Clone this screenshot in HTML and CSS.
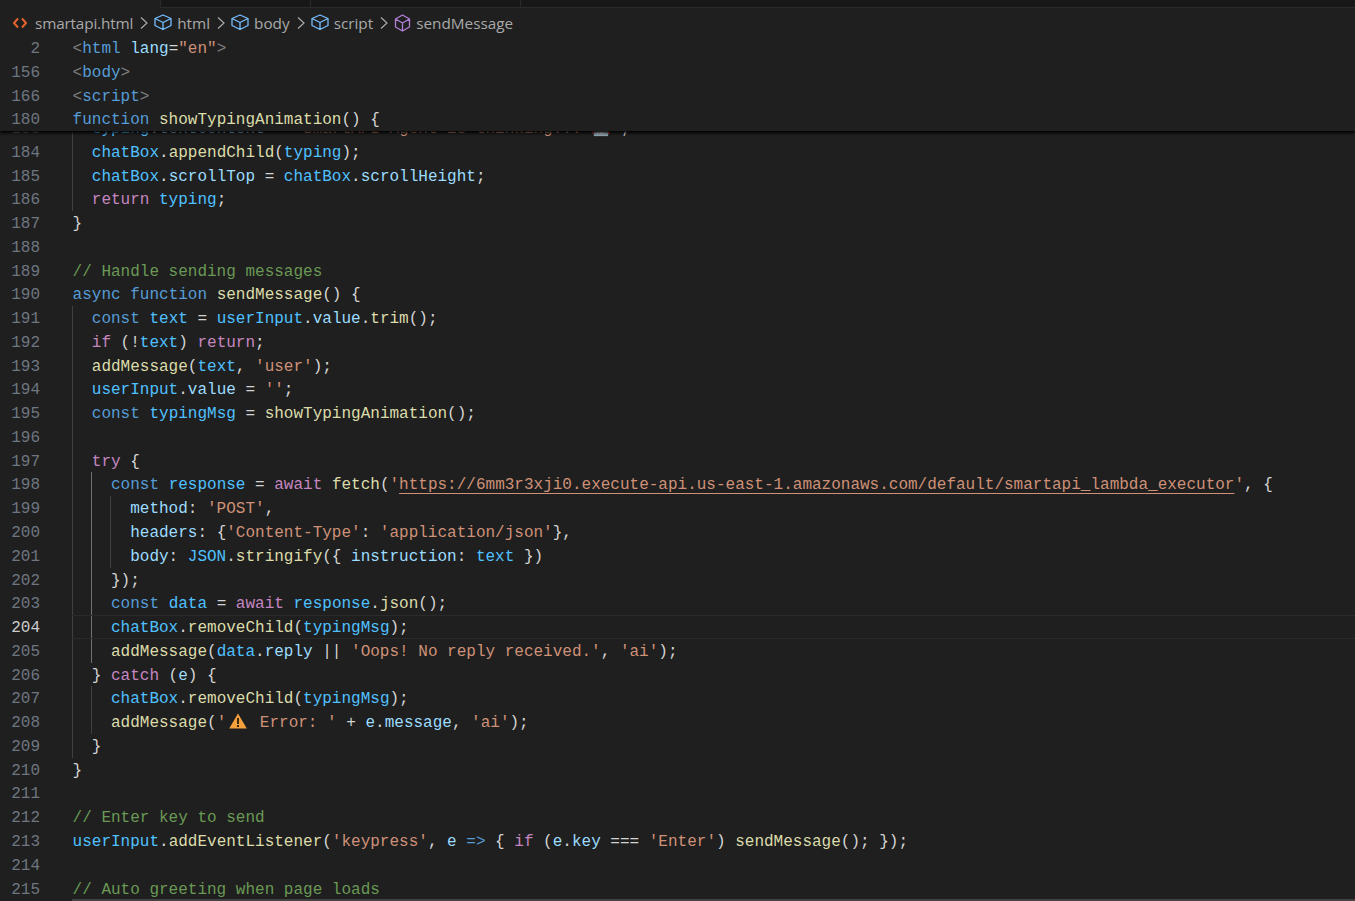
FILE: index.html
```html
<!DOCTYPE html>
<html lang="en">
<head>
  <meta charset="UTF-8" />
  <title>smartapi.html</title>
  <link rel="stylesheet" href="styles.css">
</head>
<body>
  <div class="tabs">
    <div class="tab tab-active"></div>
    <div class="tab tab-a"></div>
    <div class="tab tab-b"></div>
    <div class="tab tab-rest"></div>
  </div>

  <div class="crumbs">
    <svg class="ic-file" width="14" height="12" viewBox="0 0 14 12"><path d="M5 1.500 1 6l4 4.500M9 1.500 13 6l-4 4.500" /></svg>
    <span class="crumb crumb-file">smartapi.html</span>
    <svg class="chev" width="8" height="14" viewBox="0 0 8 14"><path d="M1 1.500 7 7l-6 5.500" /></svg>
    <svg class="cube" width="18" height="17" viewBox="0 0 18 17"><path d="M9 1 17 4.500V11.500L9 15.500 1 11.500V4.500ZM1 4.500 9 8.500 17 4.500M9 8.500V15.500" /></svg>
    <span class="crumb">html</span>
    <svg class="chev" width="8" height="14" viewBox="0 0 8 14"><path d="M1 1.500 7 7l-6 5.500" /></svg>
    <svg class="cube" width="18" height="17" viewBox="0 0 18 17"><path d="M9 1 17 4.500V11.500L9 15.500 1 11.500V4.500ZM1 4.500 9 8.500 17 4.500M9 8.500V15.500" /></svg>
    <span class="crumb">body</span>
    <svg class="chev" width="8" height="14" viewBox="0 0 8 14"><path d="M1 1.500 7 7l-6 5.500" /></svg>
    <svg class="cube" width="18" height="17" viewBox="0 0 18 17"><path d="M9 1 17 4.500V11.500L9 15.500 1 11.500V4.500ZM1 4.500 9 8.500 17 4.500M9 8.500V15.500" /></svg>
    <span class="crumb">script</span>
    <svg class="chev" width="8" height="14" viewBox="0 0 8 14"><path d="M1 1.500 7 7l-6 5.500" /></svg>
    <svg class="cube cube-method" width="17" height="18" viewBox="0 0 17 18"><path d="M8.500 1 15.500 5V13L8.500 17 1.500 13V5ZM1.500 5 8.500 9 15.500 5M8.500 9V17" /></svg>
    <span class="crumb">sendMessage</span>
  </div>

  <div class="sticky">
    <div class="row"><span class="num">2</span><code class="code"><i class="p">&lt;</i><i class="k">html</i> <i class="v">lang</i>=<i class="s">"en"</i><i class="p">&gt;</i></code></div>
    <div class="row"><span class="num">156</span><code class="code"><i class="p">&lt;</i><i class="k">body</i><i class="p">&gt;</i></code></div>
    <div class="row"><span class="num">166</span><code class="code"><i class="p">&lt;</i><i class="k">script</i><i class="p">&gt;</i></code></div>
    <div class="row"><span class="num">180</span><code class="code"><i class="k">function</i> <i class="f">showTypingAnimation</i>() {</code></div>
  </div>

  <div class="editor">
    <div class="lines">
      <div class="row"><span class="num">183</span><code class="code g1">  <i class="c">typing</i>.<i class="v">textContent</i> = <i class="s">'SmartAPI Agent is thinking... 🤖'</i>;</code></div>
      <div class="row"><span class="num">184</span><code class="code g1">  <i class="c">chatBox</i>.<i class="f">appendChild</i>(<i class="c">typing</i>);</code></div>
      <div class="row"><span class="num">185</span><code class="code g1">  <i class="c">chatBox</i>.<i class="v">scrollTop</i> = <i class="c">chatBox</i>.<i class="v">scrollHeight</i>;</code></div>
      <div class="row"><span class="num">186</span><code class="code g1">  <i class="m">return</i> <i class="c">typing</i>;</code></div>
      <div class="row"><span class="num">187</span><code class="code">}</code></div>
      <div class="row"><span class="num">188</span><code class="code"></code></div>
      <div class="row"><span class="num">189</span><code class="code"><i class="n">// Handle sending messages</i></code></div>
      <div class="row"><span class="num">190</span><code class="code"><i class="k">async</i> <i class="k">function</i> <i class="f">sendMessage</i>() {</code></div>
      <div class="row"><span class="num">191</span><code class="code g1">  <i class="k">const</i> <i class="c">text</i> = <i class="c">userInput</i>.<i class="v">value</i>.<i class="f">trim</i>();</code></div>
      <div class="row"><span class="num">192</span><code class="code g1">  <i class="m">if</i> (!<i class="c">text</i>) <i class="m">return</i>;</code></div>
      <div class="row"><span class="num">193</span><code class="code g1">  <i class="f">addMessage</i>(<i class="c">text</i>, <i class="s">'user'</i>);</code></div>
      <div class="row"><span class="num">194</span><code class="code g1">  <i class="c">userInput</i>.<i class="v">value</i> = <i class="s">''</i>;</code></div>
      <div class="row"><span class="num">195</span><code class="code g1">  <i class="k">const</i> <i class="c">typingMsg</i> = <i class="f">showTypingAnimation</i>();</code></div>
      <div class="row"><span class="num">196</span><code class="code g1"></code></div>
      <div class="row"><span class="num">197</span><code class="code g1">  <i class="m">try</i> {</code></div>
      <div class="row"><span class="num">198</span><code class="code g2">    <i class="k">const</i> <i class="c">response</i> = <i class="m">await</i> <i class="f">fetch</i>(<i class="s">'<u>https://6mm3r3xji0.execute-api.us-east-1.amazonaws.com/default/smartapi_lambda_executor</u>'</i>, {</code></div>
      <div class="row"><span class="num">199</span><code class="code g3">      <i class="v">method</i>: <i class="s">'POST'</i>,</code></div>
      <div class="row"><span class="num">200</span><code class="code g3">      <i class="v">headers</i>: {<i class="s">'Content-Type'</i>: <i class="s">'application/json'</i>},</code></div>
      <div class="row"><span class="num">201</span><code class="code g3">      <i class="v">body</i>: <i class="c">JSON</i>.<i class="f">stringify</i>({ <i class="v">instruction</i>: <i class="c">text</i> })</code></div>
      <div class="row"><span class="num">202</span><code class="code g2">    });</code></div>
      <div class="row"><span class="num">203</span><code class="code g2">    <i class="k">const</i> <i class="c">data</i> = <i class="m">await</i> <i class="c">response</i>.<i class="f">json</i>();</code></div>
      <div class="row row-current"><span class="num">204</span><code class="code g2">    <i class="c">chatBox</i>.<i class="f">removeChild</i>(<i class="c">typingMsg</i>);</code></div>
      <div class="row"><span class="num">205</span><code class="code g2">    <i class="f">addMessage</i>(<i class="c">data</i>.<i class="v">reply</i> || <i class="s">'Oops! No reply received.'</i>, <i class="s">'ai'</i>);</code></div>
      <div class="row"><span class="num">206</span><code class="code g1">  } <i class="m">catch</i> (<i class="v">e</i>) {</code></div>
      <div class="row"><span class="num">207</span><code class="code g2-dim">    <i class="c">chatBox</i>.<i class="f">removeChild</i>(<i class="c">typingMsg</i>);</code></div>
      <div class="row"><span class="num">208</span><code class="code g2-dim">    <i class="f">addMessage</i>(<i class="s">'<span class="warn"><svg width="18" height="16" viewBox="0 0 18 16"><path class="warn-bg" d="M9 0.500 17.800 15.500H0.200Z" /><path class="warn-mark" d="M8 5h2v6H8zM8 12h2v2H8z" /></svg></span> Error: '</i> + <i class="v">e</i>.<i class="v">message</i>, <i class="s">'ai'</i>);</code></div>
      <div class="row"><span class="num">209</span><code class="code g1">  }</code></div>
      <div class="row"><span class="num">210</span><code class="code">}</code></div>
      <div class="row"><span class="num">211</span><code class="code"></code></div>
      <div class="row"><span class="num">212</span><code class="code"><i class="n">// Enter key to send</i></code></div>
      <div class="row"><span class="num">213</span><code class="code"><i class="c">userInput</i>.<i class="f">addEventListener</i>(<i class="s">'keypress'</i>, <i class="v">e</i> <i class="k">=&gt;</i> { <i class="m">if</i> (<i class="v">e</i>.<i class="v">key</i> === <i class="s">'Enter'</i>) <i class="f">sendMessage</i>(); });</code></div>
      <div class="row"><span class="num">214</span><code class="code"></code></div>
      <div class="row"><span class="num">215</span><code class="code"><i class="n">// Auto greeting when page loads</i></code></div>
    </div>
    <div class="hscroll"></div>
  </div>
</body>
</html>
```
FILE: styles.css
```css
html, body {
  margin: 0;
  height: 100%;
}
body {
  background: #1f1f1f;
  color: #d4d4d4;
  display: flex;
  flex-direction: column;
  overflow: hidden;
}

/* tab strip, only its bottom edge is in view */
.tabs {
  display: flex;
  height: 8px;
  flex: none;
}
.tab {
  background: #181818;
  border-bottom: 1px solid #2b2b2b;
  border-right: 1px solid #2b2b2b;
}
.tab-active {
  width: 160px;
  background: #1f1f1f;
  border-bottom: none;
}
.tab-a { width: 149px; }
.tab-b { width: 209px; }
.tab-rest { flex: 1; border-right: none; }

.crumbs {
  display: flex;
  align-items: center;
  height: 27px;
  flex: none;
  box-sizing: border-box;
  padding: 2px 0 0 13px;
  font-family: "Open Sans", sans-serif;
  font-size: 15.3px;
  color: #a9a9a9;
}
.crumb { margin-left: 5px; }
.crumb-file {
  margin-left: 8px;
  letter-spacing: -0.16px;
}
.ic-file path {
  fill: none;
  stroke: #e2622d;
  stroke-width: 2;
}
.chev {
  margin: 0 6px 0 7px;
}
.chev path {
  fill: none;
  stroke: #a9a9a9;
  stroke-width: 1.2;
}
.cube path {
  fill: none;
  stroke: #75beff;
  stroke-width: 1.300;
  stroke-linejoin: round;
}
.cube-method path {
  stroke: #b180d7;
}

.row {
  display: flex;
  height: 23.77px;
  line-height: 27.77px;
  font-family: "Liberation Mono", monospace;
  font-size: 16px;
}
.num {
  width: 40px;
  margin-right: 32px;
  flex: none;
  text-align: right;
  color: #6e7681;
}
.code {
  flex: 1;
  font: inherit;
  white-space: pre;
  padding-left: 0.6px;
  background-origin: border-box;
}
.code i {
  font-style: normal;
}
.code u {
  text-underline-offset: 4px;
  text-decoration-skip-ink: none;
}

/* indent guides */
.g1 {
  background-image: linear-gradient(#404040, #404040);
  background-position: 0 0;
  background-size: 1px 100%;
  background-repeat: no-repeat;
}
.g2 {
  background:
    linear-gradient(#404040, #404040) 0 0 / 1px 100% no-repeat border-box,
    linear-gradient(#707070, #707070) 19px 0 / 1px 100% no-repeat border-box;
}
.g2-dim {
  background:
    linear-gradient(#404040, #404040) 0 0 / 1px 100% no-repeat border-box,
    linear-gradient(#404040, #404040) 19px 0 / 1px 100% no-repeat border-box;
}
.g3 {
  background:
    linear-gradient(#404040, #404040) 0 0 / 1px 100% no-repeat border-box,
    linear-gradient(#707070, #707070) 19px 0 / 1px 100% no-repeat border-box,
    linear-gradient(#404040, #404040) 38px 0 / 1px 100% no-repeat border-box;
}

/* token colours */
.k { color: #569cd6; }
.m { color: #c586c0; }
.v { color: #9cdcfe; }
.c { color: #4fc1ff; }
.f { color: #dcdcaa; }
.s { color: #ce9178; }
.n { color: #6a9955; }
.p { color: #808080; }

.warn {
  display: inline-block;
  width: 24px;
  padding-left: 3px;
  box-sizing: border-box;
  vertical-align: -2px;
  line-height: 0;
}
.warn-bg { fill: #f5a03c; }
.warn-mark { fill: #3a2a10; }

/* pinned scope lines */
.sticky {
  position: relative;
  z-index: 1;
  height: 96px;
  flex: none;
  box-sizing: border-box;
  padding-top: 1px;
  background: #1f1f1f;
  box-shadow: 0 2px 3px #000;
}

.editor {
  position: relative;
  flex: 1;
  overflow: hidden;
}
.lines {
  margin-top: -15px;
}
.row-current .num {
  color: #cccccc;
}
.row-current .code {
  box-shadow: inset 0 1px 0 #2b2b2b, inset 0 -1px 0 #2b2b2b;
}
.hscroll {
  position: absolute;
  left: 72px;
  right: 0;
  bottom: 0;
  height: 2px;
  background: #424242;
}
```
